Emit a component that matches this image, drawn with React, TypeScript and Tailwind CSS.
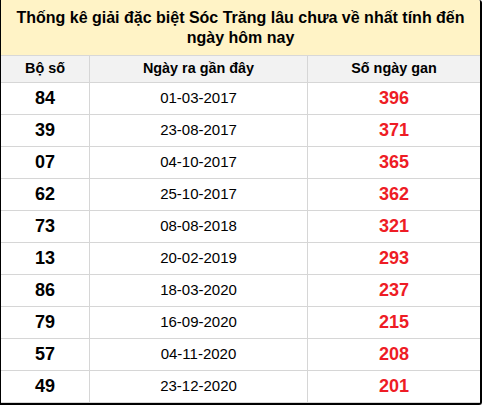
const rows = [
  { so: "84", ngay: "01-03-2017", gan: "396" },
  { so: "39", ngay: "23-08-2017", gan: "371" },
  { so: "07", ngay: "04-10-2017", gan: "365" },
  { so: "62", ngay: "25-10-2017", gan: "362" },
  { so: "73", ngay: "08-08-2018", gan: "321" },
  { so: "13", ngay: "20-02-2019", gan: "293" },
  { so: "86", ngay: "18-03-2020", gan: "237" },
  { so: "79", ngay: "16-09-2020", gan: "215" },
  { so: "57", ngay: "04-11-2020", gan: "208" },
  { so: "49", ngay: "23-12-2020", gan: "201" },
];

export default function App() {
  return (
    <div
      className="w-[482px] h-[405px] bg-white border-l border-r-2 border-b-2 border-black rounded-tr-[3px] rounded-br-[3px] overflow-hidden text-black"
      style={{ fontFamily: '"Liberation Sans", Arial, sans-serif' }}
    >
      <div className="h-[56px] bg-[#fff3c6] border-b border-[#d8d8d8] flex items-center justify-center px-2 text-center text-[16px] leading-[20px] font-bold">
        Thống kê giải đặc biệt Sóc Trăng lâu chưa về nhất tính đến
        <br />
        ngày hôm nay
      </div>
      <div className="grid grid-cols-[89px_218px_1fr] h-[27px] bg-[#f2f2f2] border-b border-[#d6d6d6] text-[14.4px] font-bold">
        <div className="flex items-center justify-center border-r border-[#d6d6d6]">Bộ số</div>
        <div className="flex items-center justify-center border-r border-[#d6d6d6]">Ngày ra gần đây</div>
        <div className="flex items-center justify-center">Số ngày gan</div>
      </div>
      {rows.map((r) => (
        <div key={r.so} className="grid grid-cols-[89px_218px_1fr] h-[32px] border-b border-[#d6d6d6]">
          <div className="flex items-center justify-center border-r border-[#d6d6d6] text-[18px] font-bold">{r.so}</div>
          <div className="flex items-center justify-center border-r border-[#d6d6d6] text-[15px]">{r.ngay}</div>
          <div className="flex items-center justify-center text-[18px] font-bold text-[#ee1c25]">{r.gan}</div>
        </div>
      ))}
    </div>
  );
}
